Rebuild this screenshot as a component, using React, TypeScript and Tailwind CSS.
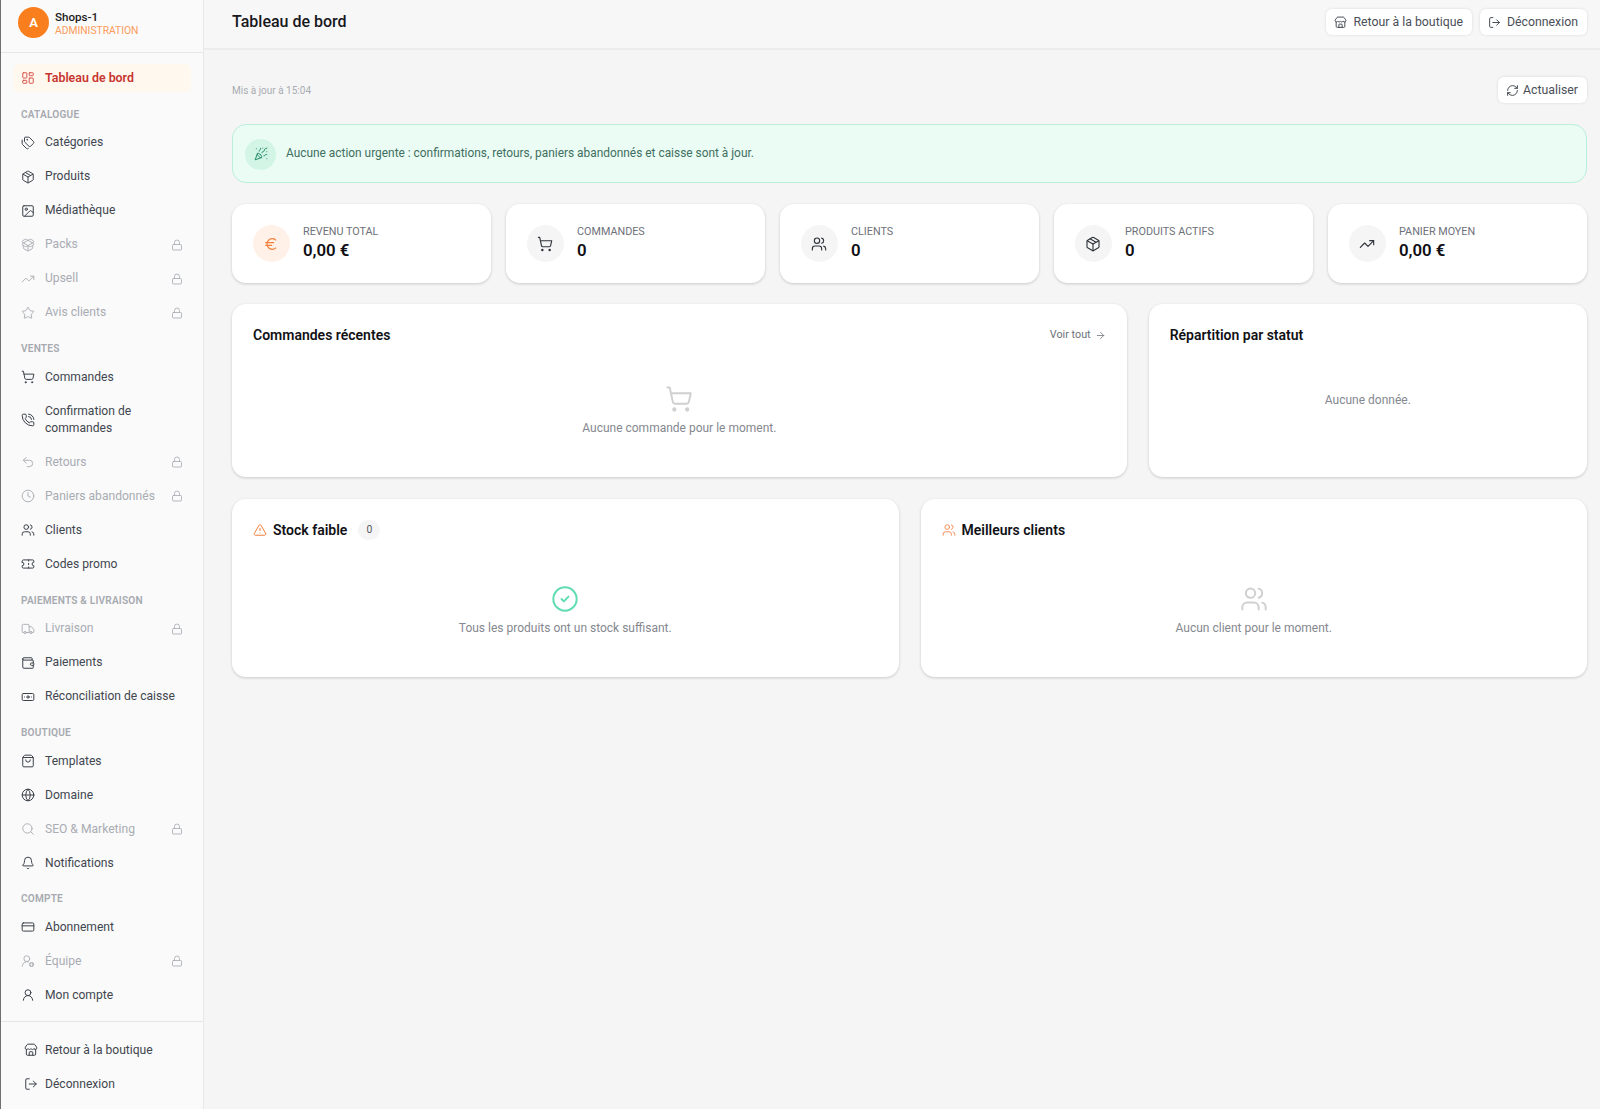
import type { ComponentType, ReactNode } from "react";
import {
  ArrowRight,
  Banknote,
  Bell,
  CircleCheck,
  Clock,
  CreditCard,
  Euro,
  Globe,
  Image,
  LayoutDashboard,
  Lock,
  LogOut,
  Package,
  PackageOpen,
  PartyPopper,
  PhoneCall,
  RefreshCw,
  Search,
  ShoppingBag,
  ShoppingCart,
  Star,
  Store,
  Tags,
  Ticket,
  TrendingUp,
  TriangleAlert,
  Truck,
  Undo2,
  UserRound,
  UserRoundCog,
  Users,
  Wallet,
} from "lucide-react";

type Icon = ComponentType<{ size?: number; strokeWidth?: number; className?: string }>;

interface NavItem {
  label: string;
  icon: Icon;
  locked?: boolean;
}

const sections: { title: string; items: NavItem[] }[] = [
  {
    title: "CATALOGUE",
    items: [
      { label: "Catégories", icon: Tags },
      { label: "Produits", icon: Package },
      { label: "Médiathèque", icon: Image },
      { label: "Packs", icon: PackageOpen, locked: true },
      { label: "Upsell", icon: TrendingUp, locked: true },
      { label: "Avis clients", icon: Star, locked: true },
    ],
  },
  {
    title: "VENTES",
    items: [
      { label: "Commandes", icon: ShoppingCart },
      { label: "Confirmation de commandes", icon: PhoneCall },
      { label: "Retours", icon: Undo2, locked: true },
      { label: "Paniers abandonnés", icon: Clock, locked: true },
      { label: "Clients", icon: Users },
      { label: "Codes promo", icon: Ticket },
    ],
  },
  {
    title: "PAIEMENTS & LIVRAISON",
    items: [
      { label: "Livraison", icon: Truck, locked: true },
      { label: "Paiements", icon: Wallet },
      { label: "Réconciliation de caisse", icon: Banknote },
    ],
  },
  {
    title: "BOUTIQUE",
    items: [
      { label: "Templates", icon: ShoppingBag },
      { label: "Domaine", icon: Globe },
      { label: "SEO & Marketing", icon: Search, locked: true },
      { label: "Notifications", icon: Bell },
    ],
  },
  {
    title: "COMPTE",
    items: [
      { label: "Abonnement", icon: CreditCard },
      { label: "Équipe", icon: UserRoundCog, locked: true },
      { label: "Mon compte", icon: UserRound },
    ],
  },
];

const stats: { label: string; value: string; icon: Icon; accent?: boolean }[] = [
  { label: "REVENU TOTAL", value: "0,00 €", icon: Euro, accent: true },
  { label: "COMMANDES", value: "0", icon: ShoppingCart },
  { label: "CLIENTS", value: "0", icon: Users },
  { label: "PRODUITS ACTIFS", value: "0", icon: Package },
  { label: "PANIER MOYEN", value: "0,00 €", icon: TrendingUp },
];

const SideLink = ({ item }: { item: NavItem }) => {
  const Icon = item.icon;
  return (
    <div
      className={`flex items-center py-[8.5px] pl-[20px] pr-[20px] text-[12.1px] leading-[17px] ${
        item.locked ? "text-[#a9acb3]" : "text-[#41464f]"
      }`}
    >
      <Icon size={14} strokeWidth={1.7} className={`mr-[10px] shrink-0 ${item.locked ? "text-[#aeb1b6]" : "text-[#3a3f48]"}`} />
      <span className="flex-1">{item.label}</span>
      {item.locked && <Lock size={12} strokeWidth={1.7} className="shrink-0 text-[#a9acb3]" />}
    </div>
  );
};

const Sidebar = () => (
  <aside className="flex h-[1109px] w-[204px] shrink-0 flex-col border-l border-r border-l-[#6f6f6f] border-r-[#e9e9ea] bg-[#fafafa]">
    <div className="flex h-[53px] shrink-0 items-center gap-[6px] border-b border-[#e6e6e7] pb-[7px] pl-[17px]">
      <div className="flex h-[31px] w-[31px] items-center justify-center rounded-full bg-[#f97f1e] text-[13px] font-semibold text-white">
        A
      </div>
      <div>
        <div className="text-[11.6px] font-medium leading-[16px] text-[#1a1a20]">Shops-1</div>
        <div className="text-[10.3px] leading-[12px] text-[#fb9a5c]">ADMINISTRATION</div>
      </div>
    </div>
    <div className="flex-1">
      <div className="mx-[12px] mb-[3.5px] mt-[11px] flex h-[28px] items-center rounded-md bg-[#fff8ef] pl-[8px] text-[12.4px] font-semibold text-[#c8352f]">
        <LayoutDashboard size={14} strokeWidth={1.7} className="mr-[10px] text-[#d9534a]" />
        Tableau de bord
      </div>
      {sections.map((section) => (
        <div key={section.title}>
          <div className="pb-[5px] pl-[20px] pt-[13.4px] text-[10.1px] font-semibold leading-[12px] tracking-[0.2px] text-[#a6a9af]">
            {section.title}
          </div>
          {section.items.map((item) => (
            <SideLink key={item.label} item={item} />
          ))}
        </div>
      ))}
    </div>
    <div className="h-[88px] shrink-0 border-t border-[#e6e6e7] pt-[11px]">
      <div className="flex h-[34px] items-center pl-[23px] text-[12.1px] text-[#41464f]">
        <Store size={14} strokeWidth={1.7} className="mr-[7px] text-[#3a3f48]" />
        Retour à la boutique
      </div>
      <div className="flex h-[34px] items-center pl-[23px] text-[12.1px] text-[#41464f]">
        <LogOut size={14} strokeWidth={1.7} className="mr-[7px] text-[#3a3f48]" />
        Déconnexion
      </div>
    </div>
  </aside>
);

const Ghost = ({ icon: Icon, children, gap = "gap-[6px]" }: { icon: Icon; children: ReactNode; gap?: string }) => (
  <div className={`flex h-[26px] items-center rounded-md bg-white pl-[8px] pr-[9px] text-[12.3px] text-[#4a4e57] shadow-[0_0_3px_rgba(0,0,0,0.12)] ${gap}`}>
    <Icon size={13} strokeWidth={1.7} className="text-[#3a3f48]" />
    {children}
  </div>
);

const Card = ({ children, className }: { children: ReactNode; className?: string }) => (
  <div className={`rounded-[14px] bg-white shadow-[0_1px_3px_rgba(0,0,0,0.18)] ${className ?? ""}`}>{children}</div>
);

const Empty = ({ icon: Icon, text, tone }: { icon: Icon; text: string; tone: string }) => (
  <div className="flex flex-col items-center">
    <Icon size={28} strokeWidth={1.7} className={tone} />
    <div className="mt-[7px] text-[12px] leading-[17px] text-[#85888f]">{text}</div>
  </div>
);

export default function App() {
  return (
    <div className="flex min-h-[1109px] bg-[#f5f5f5] font-['Roboto',sans-serif]">
      <Sidebar />
      <main className="flex-1">
        <header className="flex h-[50px] items-center justify-between border-b-2 border-[#ececec] bg-[#f7f7f7] pb-[4px] pl-[28px] pr-[13px]">
          <h1 className="text-[16px] font-medium text-[#17171c]">Tableau de bord</h1>
          <div className="flex gap-[8px]">
            <Ghost icon={Store}>Retour à la boutique</Ghost>
            <Ghost icon={LogOut}>Déconnexion</Ghost>
          </div>
        </header>
        <div className="pl-[28px] pr-[13px] pt-[27px]">
          <div className="flex items-center justify-between">
            <span className="text-[10px] text-[#a9acb2]">Mis à jour à 15:04</span>
            <Ghost icon={RefreshCw} gap="gap-[4px]">
              Actualiser
            </Ghost>
          </div>
          <div className="mt-[21px] flex h-[59px] items-center gap-[10px] rounded-[14px] border border-[#b9efdc] bg-[#ebfcf5] pl-[12px] pt-[1px] text-[11.9px] text-[#3f6f60]">
            <span className="flex h-[31px] w-[31px] items-center justify-center rounded-full bg-[#d2f5e6]">
              <PartyPopper size={14} strokeWidth={1.7} className="text-[#1f8a63]" />
            </span>
            Aucune action urgente : confirmations, retours, paniers abandonnés et caisse sont à jour.
          </div>
          <div className="mt-[21px] grid grid-cols-5 gap-[15px]">
            {stats.map((stat) => {
              const Icon = stat.icon;
              return (
                <Card key={stat.label} className="flex h-[79px] items-center pl-[20.5px]">
                  <span
                    className={`mr-[13.5px] flex h-[37px] w-[37px] items-center justify-center rounded-full ${
                      stat.accent ? "bg-[#fff1e8]" : "bg-[#f5f5f5]"
                    }`}
                  >
                    <Icon size={16} strokeWidth={1.7} className={stat.accent ? "text-[#f37f38]" : "text-[#2f333b]"} />
                  </span>
                  <div className="pb-[2px]">
                    <div className="text-[10.8px] leading-[15px] text-[#6e7179]">{stat.label}</div>
                    <div className="mt-[1px] text-[16.8px] font-semibold leading-[21px] text-[#0f0f14]">{stat.value}</div>
                  </div>
                </Card>
              );
            })}
          </div>
          <div className="mt-[21px] grid grid-cols-[894fr_438fr] gap-[22px]">
            <Card className="h-[173px] px-[21px] pt-[21px]">
              <div className="flex items-center justify-between">
                <h2 className="text-[14px] font-semibold leading-[20px] text-[#111116]">Commandes récentes</h2>
                <span className="flex items-center gap-[4px] text-[10.8px] text-[#6e7179]">
                  Voir tout <ArrowRight size={11} strokeWidth={1.7} />
                </span>
              </div>
              <div className="mt-[40px]">
                <Empty icon={ShoppingCart} text="Aucune commande pour le moment." tone="text-[#cfd0d2]" />
              </div>
            </Card>
            <Card className="h-[173px] px-[21px] pt-[21px]">
              <h2 className="text-[14px] font-semibold leading-[20px] text-[#111116]">Répartition par statut</h2>
              <div className="mt-[47px] text-center text-[12px] leading-[17px] text-[#85888f]">Aucune donnée.</div>
            </Card>
          </div>
          <div className="mt-[22px] grid grid-cols-2 gap-[22px]">
            <Card className="h-[178px] px-[21px] pt-[21px]">
              <div className="flex items-center">
                <TriangleAlert size={14} strokeWidth={1.7} className="mr-[6px] text-[#ee7d3a]" />
                <h2 className="text-[14px] font-semibold leading-[20px] text-[#111116]">Stock faible</h2>
                <span className="ml-[11px] flex h-[20px] w-[22px] items-center justify-center rounded-full bg-[#f5f5f5] text-[10.4px] text-[#55585f]">
                  0
                </span>
              </div>
              <div className="mt-[45px]">
                <Empty icon={CircleCheck} text="Tous les produits ont un stock suffisant." tone="text-[#5fdcb2]" />
              </div>
            </Card>
            <Card className="h-[178px] px-[21px] pt-[21px]">
              <div className="flex items-center">
                <Users size={14} strokeWidth={1.7} className="mr-[6px] text-[#f58d58]" />
                <h2 className="text-[14px] font-semibold leading-[20px] text-[#111116]">Meilleurs clients</h2>
              </div>
              <div className="mt-[45px]">
                <Empty icon={Users} text="Aucun client pour le moment." tone="text-[#cfd0d2]" />
              </div>
            </Card>
          </div>
        </div>
      </main>
    </div>
  );
}
